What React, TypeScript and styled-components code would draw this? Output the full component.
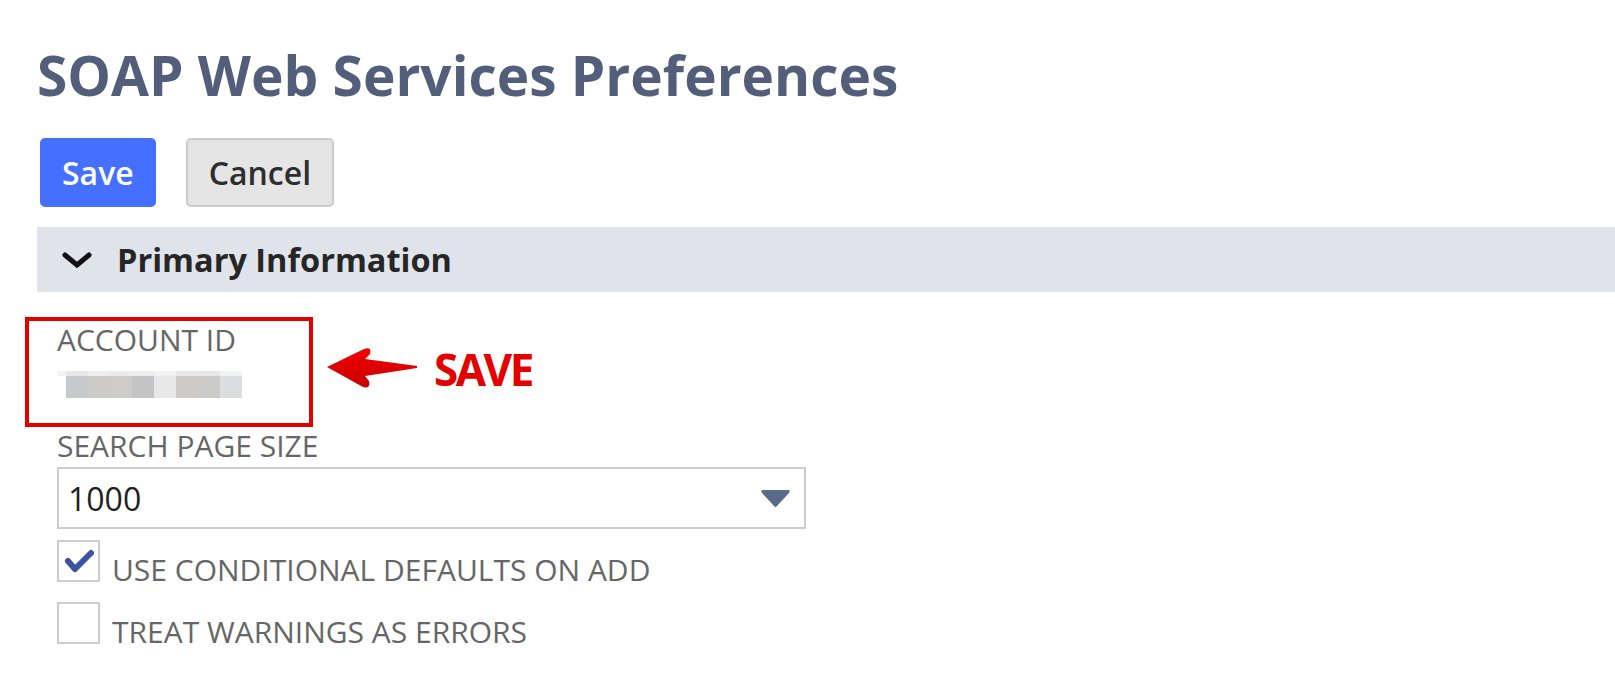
import * as React from 'react';
import styled, { createGlobalStyle } from 'styled-components';

const GlobalStyle = createGlobalStyle`
  html, body {
    margin: 0;
    padding: 0;
    background: #ffffff;
  }

  body {
    font-family: 'Open Sans', 'Noto Sans', 'Liberation Sans', sans-serif;
    color: #333333;
  }
`;

const Page = styled.div`
  padding: 37px 0 0 37px;
`;

const Title = styled.h1`
  margin: 0;
  font-size: 55px;
  line-height: 76px;
  font-weight: 700;
  color: #535e7a;
`;

const ButtonBar = styled.div`
  display: flex;
  gap: 30px;
  margin-top: 25px;
  padding-left: 3px;
`;

const Button = styled.button<{ $primary?: boolean }>`
  height: 69px;
  padding: 0 ${(p) => (p.$primary ? '20px' : '21px')};
  border-radius: 5px;
  border: 2px solid ${(p) => (p.$primary ? '#4570ff' : '#cbcbcb')};
  background: ${(p) => (p.$primary ? '#4570ff' : '#e5e5e5')};
  color: ${(p) => (p.$primary ? '#ffffff' : '#2e2e2e')};
  font-family: inherit;
  font-size: 32px;
  font-weight: 600;
  cursor: pointer;
`;

const SectionHeader = styled.div`
  display: flex;
  align-items: center;
  height: 65px;
  margin-top: 20px;
  padding-left: 25px;
  background: #e0e3ea;
`;

const SectionTitle = styled.span`
  margin-left: 25px;
  font-size: 32.5px;
  font-weight: 700;
  color: #262626;
`;

const Fields = styled.div`
  display: flex;
  flex-direction: column;
  margin-top: 25px;
  padding-left: 20px;
`;

const HighlightRow = styled.div`
  display: flex;
  align-items: flex-start;
`;

const HighlightBox = styled.div`
  box-sizing: border-box;
  width: 288px;
  margin-left: -32px;
  padding: 0 0 25px 28px;
  border: 4px solid #e40000;
`;

const Annotation = styled.div`
  display: flex;
  align-items: center;
  gap: 17px;
  margin: 28px 0 0 14px;
`;

const AnnotationText = styled.span`
  margin-top: 2px;
  font-size: 44px;
  line-height: 44px;
  font-weight: 700;
  letter-spacing: -2.5px;
  color: #e40000;
`;

const Label = styled.div`
  font-size: 30px;
  line-height: 38px;
  color: #666666;
`;

const MaskedValue = styled.div`
  display: flex;
  flex-direction: column;
  margin-top: 12px;
`;

const PixelRow = styled.div`
  display: flex;
`;

const Pixel = styled.span<{ $w: number; $h: number; $c: string }>`
  display: block;
  width: ${(p) => p.$w}px;
  height: ${(p) => p.$h}px;
  background: ${(p) => p.$c};
`;

const Select = styled.div`
  box-sizing: border-box;
  display: flex;
  align-items: center;
  justify-content: space-between;
  width: 749px;
  height: 62px;
  margin-top: 2px;
  padding: 0 13px 0 9px;
  border: 2px solid #cccccc;
  font-size: 32px;
  color: #1f1f1f;
`;

const CheckRow = styled.label<{ $first?: boolean }>`
  display: flex;
  align-items: flex-start;
  height: 42px;
  margin-top: ${(p) => (p.$first ? '11px' : '20px')};
`;

const CheckBox = styled.span`
  box-sizing: border-box;
  display: flex;
  align-items: center;
  justify-content: center;
  flex: none;
  width: 43px;
  height: 42px;
  border: 2px solid #cccccc;
  background: #ffffff;
`;

const CheckLabel = styled(Label)`
  margin: 11px 0 0 12px;
`;

const topStrip = [
  { w: 9, c: '#f3f3f1' },
  { w: 22, c: '#e6e7e8' },
  { w: 22, c: '#eeeeee' },
  { w: 22, c: '#ebebeb' },
  { w: 22, c: '#ececec' },
  { w: 22, c: '#f3f3f3' },
  { w: 22, c: '#e9e9e9' },
  { w: 22, c: '#e8e8e8' },
  { w: 22, c: '#f1f2f2' },
];

const mainStrip = [
  { w: 9, c: '#ffffff' },
  { w: 22, c: '#c6cacd' },
  { w: 22, c: '#cccbc8' },
  { w: 22, c: '#cdcccb' },
  { w: 22, c: '#c4c4c6' },
  { w: 22, c: '#e8e8e8' },
  { w: 22, c: '#ccc9c7' },
  { w: 22, c: '#cbcac9' },
  { w: 22, c: '#dcdddf' },
];

const Chevron = () => (
  <svg width="30" height="16" viewBox="0 0 30 16">
    <polyline points="3,3 15,13 27,3" fill="none" stroke="#111" strokeWidth="5" strokeLinecap="round" strokeLinejoin="miter" />
  </svg>
);

const LeftArrow = () => (
  <svg width="90" height="42" viewBox="0 0 90 42">
    <defs>
      <linearGradient id="arrowFill" x1="0" y1="0" x2="0" y2="1">
        <stop offset="0" stopColor="#f20000" />
        <stop offset="1" stopColor="#c80000" />
      </linearGradient>
    </defs>
    <path
      d="M0,20 L37,2 Q45,-1 43,7 L38,12 L90,19 L90,21 L38,29 L42,34 Q44,42 36,40 Z"
      fill="url(#arrowFill)"
    />
  </svg>
);

const Caret = () => (
  <svg width="31" height="19" viewBox="0 0 31 19">
    <path d="M3,1 L28,1 Q31,1 29,4 L17,17 Q15.5,19 14,17 L2,4 Q0,1 3,1 Z" fill="#5a6a8c" />
  </svg>
);

const Tick = () => (
  <svg width="34" height="28" viewBox="0 0 34 28">
    <polyline points="6,14 13,22 29,6" fill="none" stroke="#3c54a0" strokeWidth="6" strokeLinecap="round" strokeLinejoin="round" />
  </svg>
);

export default function App() {
  return (
    <>
      <GlobalStyle />
      <Page>
        <Title>SOAP Web Services Preferences</Title>

        <ButtonBar>
          <Button $primary>Save</Button>
          <Button>Cancel</Button>
        </ButtonBar>

        <SectionHeader>
          <Chevron />
          <SectionTitle>Primary Information</SectionTitle>
        </SectionHeader>

        <Fields>
          <HighlightRow>
            <HighlightBox>
              <Label>ACCOUNT ID</Label>
              <MaskedValue>
                <PixelRow>
                  {topStrip.map((p, i) => (
                    <Pixel key={i} $w={p.w} $h={5} $c={p.c} />
                  ))}
                </PixelRow>
                <PixelRow>
                  {mainStrip.map((p, i) => (
                    <Pixel key={i} $w={p.w} $h={22} $c={p.c} />
                  ))}
                </PixelRow>
              </MaskedValue>
            </HighlightBox>
            <Annotation>
              <LeftArrow />
              <AnnotationText>SAVE</AnnotationText>
            </Annotation>
          </HighlightRow>

          <Label>SEARCH PAGE SIZE</Label>
          <Select>
            <span>1000</span>
            <Caret />
          </Select>

          <CheckRow $first>
            <CheckBox>
              <Tick />
            </CheckBox>
            <CheckLabel>USE CONDITIONAL DEFAULTS ON ADD</CheckLabel>
          </CheckRow>
          <CheckRow>
            <CheckBox />
            <CheckLabel>TREAT WARNINGS AS ERRORS</CheckLabel>
          </CheckRow>
        </Fields>
      </Page>
    </>
  );
}
